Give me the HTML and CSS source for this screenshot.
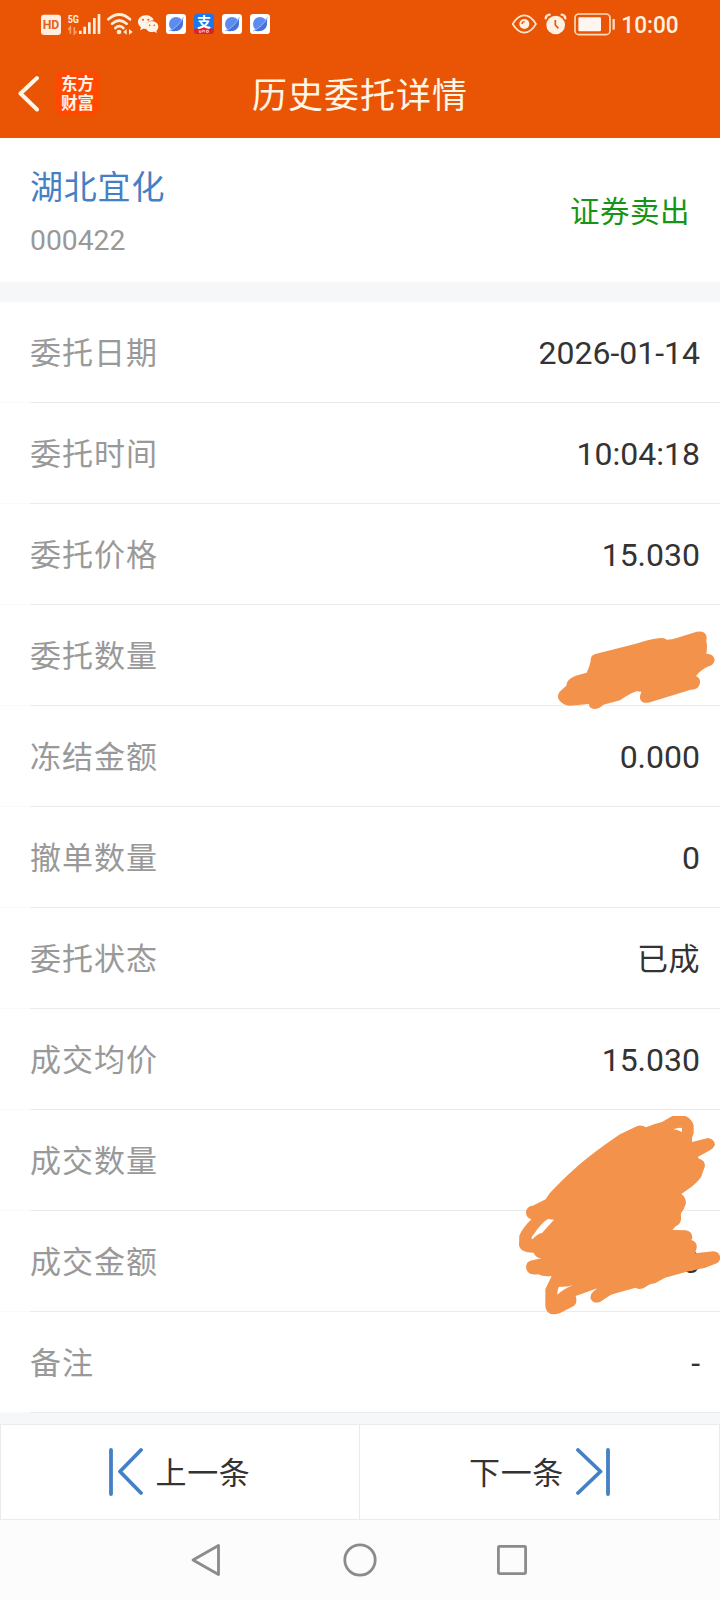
FILE: index.html
```html
<!DOCTYPE html>
<html lang="zh-CN">
<head>
<meta charset="utf-8">
<title>历史委托详情</title>
<link rel="stylesheet" href="styles.css">
</head>
<body>
<div class="screen">
  <header class="top">
    <div class="status">
      <svg class="status-left" width="250" height="50" viewBox="0 0 750 150">
        <rect x="33" y="44" width="60" height="61" rx="9" fill="#ffeede"/>
        <text class="hd" x="38" y="88" textLength="50" lengthAdjust="spacingAndGlyphs">HD</text>
        <text class="fiveg" x="113" y="68" textLength="34" lengthAdjust="spacingAndGlyphs">5G</text>
        <path d="M121 101V82L115 89M133 82v19l7-7" fill="none" stroke="#f8a06c" stroke-width="5"/>
        <path d="M151 92v10M164 80v22M178 67v35M193 54v48M207 42v60" stroke="#ffeede" stroke-width="8"/>
        <g fill="none" stroke="#ffeede" stroke-width="8" stroke-linecap="round">
          <path d="M235 58Q268 29 300 58M246 71Q268 52 290 71M256 84Q268 73 280 84"/>
        </g>
        <circle cx="267" cy="96" r="7" fill="#ffeede"/>
        <path d="M290 87v17l-10-8zM297 87v17l11-8z" fill="#ffeede"/>
        <path d="M347 46c-14 0-23 9-23 20 0 7 4 12 9 16l-3 9 10-5 9 1c-4-15 7-26 22-26-2-9-12-15-24-15z" fill="#fff3e8"/>
        <path d="M366 64c-11 0-19 7-19 16s8 16 19 16l7-1 8 4-2-7c4-3 6-7 6-12 0-9-8-16-19-16z" fill="#fff3e8"/>
        <g fill="#e95504"><circle cx="339" cy="59" r="3"/><circle cx="355" cy="59" r="3"/><circle cx="359" cy="76" r="2.5"/><circle cx="373" cy="76" r="2.5"/></g>
        <g id="planet">
          <rect x="408" y="42" width="60" height="60" rx="10" fill="#fff"/>
          <circle cx="438" cy="72" r="21" fill="#5c8cf0"/>
          <path d="M420 91Q444 80 458 54Q463 74 450 87Q436 98 420 91" fill="#456fdc"/>
          <path d="M417 93Q443 83 461 52" fill="none" stroke="#9dbcf8" stroke-width="3"/>
        </g>
        <rect x="492" y="41" width="60" height="61" rx="10" fill="#1b78ec"/>
        <path d="M492 87Q522 78 552 87v5q0 10-10 10h-40q-10 0-10-10z" fill="#e01f2b"/>
        <text class="pay" x="522" y="80" text-anchor="middle">支</text>
        <path d="M508 91v6h5v-6M518 97v-6h5v6M529 91v6h6v-6z" fill="none" stroke="#ffd8d8" stroke-width="2.5"/>
        <use href="#planet" x="168"/>
        <use href="#planet" x="252"/>
      </svg>
      <svg class="status-right" width="220" height="50" viewBox="0 0 660 150">
        <path d="M38 72Q54 46 73 46T108 72Q92 98 73 98T38 72z" fill="none" stroke="#ffe6d0" stroke-width="5"/>
        <circle cx="73" cy="72" r="15" fill="#fff0e4"/>
        <path d="M66 72q0-7 8-7" fill="none" stroke="#e95504" stroke-width="4"/>
        <circle cx="167" cy="75" r="28" fill="#fff0e4"/>
        <path d="M137 55q1-10 12-11M185 44q10 1 11 11" fill="none" stroke="#ffe6d0" stroke-width="7" stroke-linecap="round"/>
        <path d="M166 60v15l9 10" fill="none" stroke="#e95504" stroke-width="5"/>
        <rect x="225" y="42" width="105" height="62" rx="12" fill="none" stroke="#ffdcc0" stroke-width="5"/>
        <rect x="235" y="52" width="68" height="42" rx="4" fill="#fff6ef"/>
        <path d="M341 57v32" stroke="#ffdcc0" stroke-width="7"/>
        <text class="clock" x="364" y="99" textLength="172" lengthAdjust="spacingAndGlyphs">10:00</text>
      </svg>
    </div>
    <div class="titlebar">
      <div class="nav-left">
        <svg width="22" height="38" viewBox="0 0 22 38"><path d="M20 3 3.500 18.500 20 34.500" fill="none" stroke="#fff6e8" stroke-width="4" stroke-linecap="round" stroke-linejoin="round"/></svg>
        <div class="logo"><span>东方</span><span>财富</span></div>
      </div>
      <h1 class="title">历史委托详情</h1>
    </div>
  </header>
  <section class="stock">
    <div>
      <div class="name">湖北宜化</div>
      <div class="code">000422</div>
    </div>
    <div class="side">证券卖出</div>
  </section>
  <main class="list">
    <div class="row"><span class="label">委托日期</span><span class="value">2026-01-14</span></div>
    <div class="row"><span class="label">委托时间</span><span class="value">10:04:18</span></div>
    <div class="row"><span class="label">委托价格</span><span class="value">15.030</span></div>
    <div class="row"><span class="label">委托数量</span></div>
    <div class="row"><span class="label">冻结金额</span><span class="value">0.000</span></div>
    <div class="row"><span class="label">撤单数量</span><span class="value">0</span></div>
    <div class="row"><span class="label">委托状态</span><span class="value value-cjk">已成</span></div>
    <div class="row"><span class="label">成交均价</span><span class="value">15.030</span></div>
    <div class="row"><span class="label">成交数量</span></div>
    <div class="row"><span class="label">成交金额</span><span class="value">0</span></div>
    <div class="row"><span class="label">备注</span><span class="value">-</span></div>
    <svg class="mask mask-small" width="180" height="180" viewBox="0 0 540 540">
      <path fill="#f2924b" d="M152 152Q151 136 166 132L270 106Q345 83 366 84Q376 85 380 89Q397 89 410 84L470 65Q496 61 500 80L499 96Q503 105 499 131Q520 130 524 149Q522 165 506 169Q484 178 468 198Q482 204 480 219Q476 240 452 239L330 277Q306 283 300 266Q299 257 304 245L290 244Q270 250 240 271L190 284Q170 302 155 295Q146 290 147 282L90 287Q70 287 57 270Q50 258 59 245L79 227Q80 207 107 197L140 188Q150 166 152 152z"/>
    </svg>
    <svg class="mask mask-large" width="210" height="220" viewBox="0 0 630 660">
      <path fill="#f2924b" fill-rule="evenodd" d="M107 298L119 280Q158 238 190 210Q240 164 330 103L382 78Q396 74 408 82Q430 72 456 66L487 48L526 48Q545 55 551 76L551 100L546 113L546 126L594 114Q613 117 615 134Q611 145 600 151L563 171L567 176Q585 180 585 198Q579 215 573 232Q561 249 545 260L514 282Q528 292 528 310Q522 330 512 342Q518 371 497 379L487 390L528 391Q547 395 547 414L544 420Q562 425 560 445L555 460L610 454Q627 455 631 472Q631 483 620 490L586 503L530 515L465 533L435 550Q420 551 412 557Q393 573 377 563L320 579L303 584L270 606Q250 612 242 596Q239 585 249 575L262 565L197 588Q204 609 190 619L149 640Q111 651 106 620L106 568L125 528Q100 531 84 523Q50 527 48 501Q49 483 67 481L95 475Q77 474 71 458Q30 458 27 435L28 407Q38 384 64 358Q47 353 48 334Q51 319 68 317zM114 357L132 359L96 399Q84 400 67 418Q60 414 72 402Q95 367 114 357zM490 88Q503 82 516 84L516 96Q501 88 490 88zM147 560Q165 562 188 556Q160 567 143 584Q140 571 147 560z"/>
    </svg>
  </main>
  <nav class="pager">
    <a class="page">
      <svg width="34" height="48" viewBox="0 0 34 48"><path d="M2 2v44M32 2 11 23.500 32 45" fill="none" stroke="#4580c4" stroke-width="3.800" stroke-linecap="round" stroke-linejoin="round"/></svg>
      <span class="page-text">上一条</span>
    </a>
    <a class="page">
      <span class="page-text">下一条</span>
      <svg width="34" height="48" viewBox="0 0 34 48"><path d="M32 2v44M2 2 24.500 23.500 2 45" fill="none" stroke="#4580c4" stroke-width="3.800" stroke-linecap="round" stroke-linejoin="round"/></svg>
    </a>
  </nav>
  <footer class="system">
    <svg width="340" height="36" viewBox="0 0 340 36" fill="none" stroke="#8b8b8b" stroke-width="2.800" stroke-linejoin="round">
      <path d="M28.500 3.500v29L3 18z"/>
      <circle cx="170" cy="18" r="15.200"/>
      <rect x="308.400" y="4.400" width="27.200" height="27.200" rx="1"/>
    </svg>
  </footer>
</div>
</body>
</html>
```
FILE: styles.css
```css
* { box-sizing: border-box; }
body {
  margin: 0;
  font-family: Roboto, "Noto Sans CJK SC", sans-serif;
  color: #333;
}
.screen {
  width: 720px;
  height: 1600px;
  display: flex;
  flex-direction: column;
  background: #f6f7f9;
  overflow: hidden;
}
.top { height: 138px; background: #e95504; }
.status {
  height: 50px;
  display: flex;
  justify-content: space-between;
  padding-left: 30px;
}
.hd { font: 700 40px Roboto, sans-serif; fill: #e0641c; }
.fiveg { font: 700 34px Roboto, sans-serif; fill: #ffeede; }
.pay { font: 700 42px "Noto Sans CJK SC", sans-serif; fill: #fff; }
.clock { font: 500 69px Roboto, sans-serif; fill: #fff0e0; }
.titlebar {
  height: 88px;
  display: grid;
  grid-template-columns: 1fr auto 1fr;
  align-items: center;
}
.nav-left {
  display: flex;
  align-items: center;
  gap: 16px;
  padding: 0 0 1px 17px;
}
.logo {
  width: 45px;
  height: 45px;
  border-radius: 9px;
  background: #ff4800;
  color: #fff3e5;
  display: flex;
  flex-direction: column;
  align-items: center;
  justify-content: center;
  font: 700 16.500px/19px "Liberation Sans", "Noto Sans CJK SC", sans-serif;
}
.title {
  margin: 0;
  padding-top: 6px;
  font-size: 35px;
  letter-spacing: 1px;
  font-weight: 400;
  line-height: 52px;
  color: #fff6e8;
}
.stock {
  height: 144px;
  padding: 2px 30px 0;
  display: flex;
  justify-content: space-between;
  align-items: center;
  background: #fff;
}
.name { font-size: 33px; letter-spacing: 0.8px; line-height: 50px; color: #4580c4; }
.code { font-size: 28.300px; line-height: 36px; margin-top: 10px; color: #999; }
.side { padding-top: 2px; font-size: 29.500px; letter-spacing: 0.5px; line-height: 44px; color: #159415; }
.list { position: relative; margin-top: 20px; background: #fff; }
.row {
  height: 101px;
  padding: 2px 20px 1px 30px;
  display: flex;
  align-items: center;
  justify-content: space-between;
  background: linear-gradient(90deg, #fafafa 30px, #ebebeb 30px) bottom / 100% 1px no-repeat;
  font-size: 32px;
  line-height: 46px;
}
.label { padding-top: 2px; color: #999; font-size: 31px; letter-spacing: 1px; }
.value { color: #333; }
.value-cjk { padding-top: 2px; font-size: 31px; letter-spacing: 0.5px; }
.mask { position: absolute; }
.mask-small { left: 540px; top: 308px; }
.mask-large { left: 510px; top: 798px; }
.pager {
  height: 96px;
  margin-top: 11px;
  display: grid;
  grid-template-columns: 1fr 1fr;
  background: #fff;
}
.page {
  display: flex;
  align-items: center;
  justify-content: center;
  gap: 12px;
  border: 1px solid #ebebeb;
  padding-bottom: 1px;
}
.page + .page { border-left: 0; }
.page-text { padding-top: 4px; font-size: 31px; letter-spacing: 0.7px; line-height: 46px; }
.system {
  height: 80px;
  display: flex;
  align-items: center;
  justify-content: center;
  background: #fcfcfc;
}
```
